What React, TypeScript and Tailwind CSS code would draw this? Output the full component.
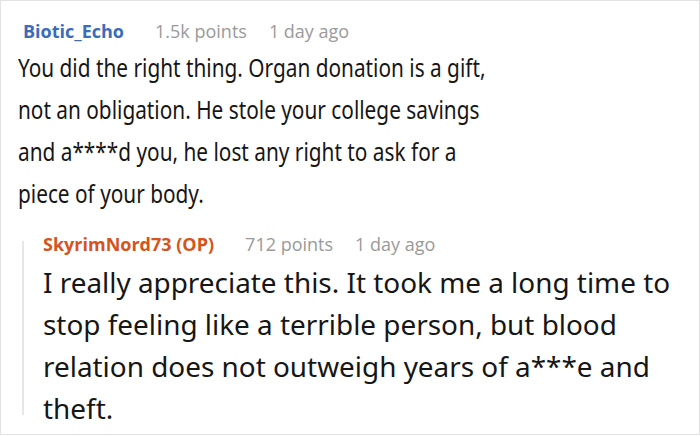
import React from "react";

export default function App() {
  return (
    <div className="w-[700px] h-[436px] bg-white" style={{ fontFamily: '"Open Sans", "Noto Sans", sans-serif' }}>
      <div className="w-[700px] h-[435px] border border-[#e2e2e2] overflow-hidden">
        <div className="pt-[19px] pl-[22px] flex items-baseline text-[18px] leading-[22px]">
          <span className="font-bold text-[#3b6cba]">Biotic_Echo</span>
          <span className="ml-[31px] text-[#9a9a9a]">1.5k points</span>
          <span className="ml-[22px] text-[#9a9a9a]">1 day ago</span>
        </div>
        <div className="pl-[17px] mt-[4px]">
          <div className="origin-left scale-x-[0.832] whitespace-nowrap text-[25px] leading-[42px] text-[#161616] font-['Noto_Sans',sans-serif]">
            You did the right thing. Organ donation is a gift,<br />
            not an obligation. He stole your college savings<br />
            and a****d you, he lost any right to ask for a<br />
            piece of your body.
          </div>
        </div>
        <div className="flex ml-[21px] mt-[17px]">
          <div className="w-[2px] bg-[#e6e6e6] mt-[10px] h-[174px] shrink-0" />
          <div className="pl-[19px]">
            <div className="flex items-baseline text-[18px] leading-[22px] pt-[2px]">
              <span className="font-bold text-[#d5541c]">SkyrimNord73 (OP)</span>
              <span className="ml-[31px] text-[#9a9a9a]">712 points</span>
              <span className="ml-[22px] text-[#9a9a9a]">1 day ago</span>
            </div>
            <div className="text-[27.9px] leading-[42px] whitespace-nowrap text-[#161616] font-['Noto_Sans',sans-serif] mt-[6px]">
              I really appreciate this. It took me a long time to<br />
              stop feeling like a terrible person, but blood<br />
              relation does not outweigh years of a***e and<br />
              theft.
            </div>
          </div>
        </div>
      </div>
    </div>
  );
}
